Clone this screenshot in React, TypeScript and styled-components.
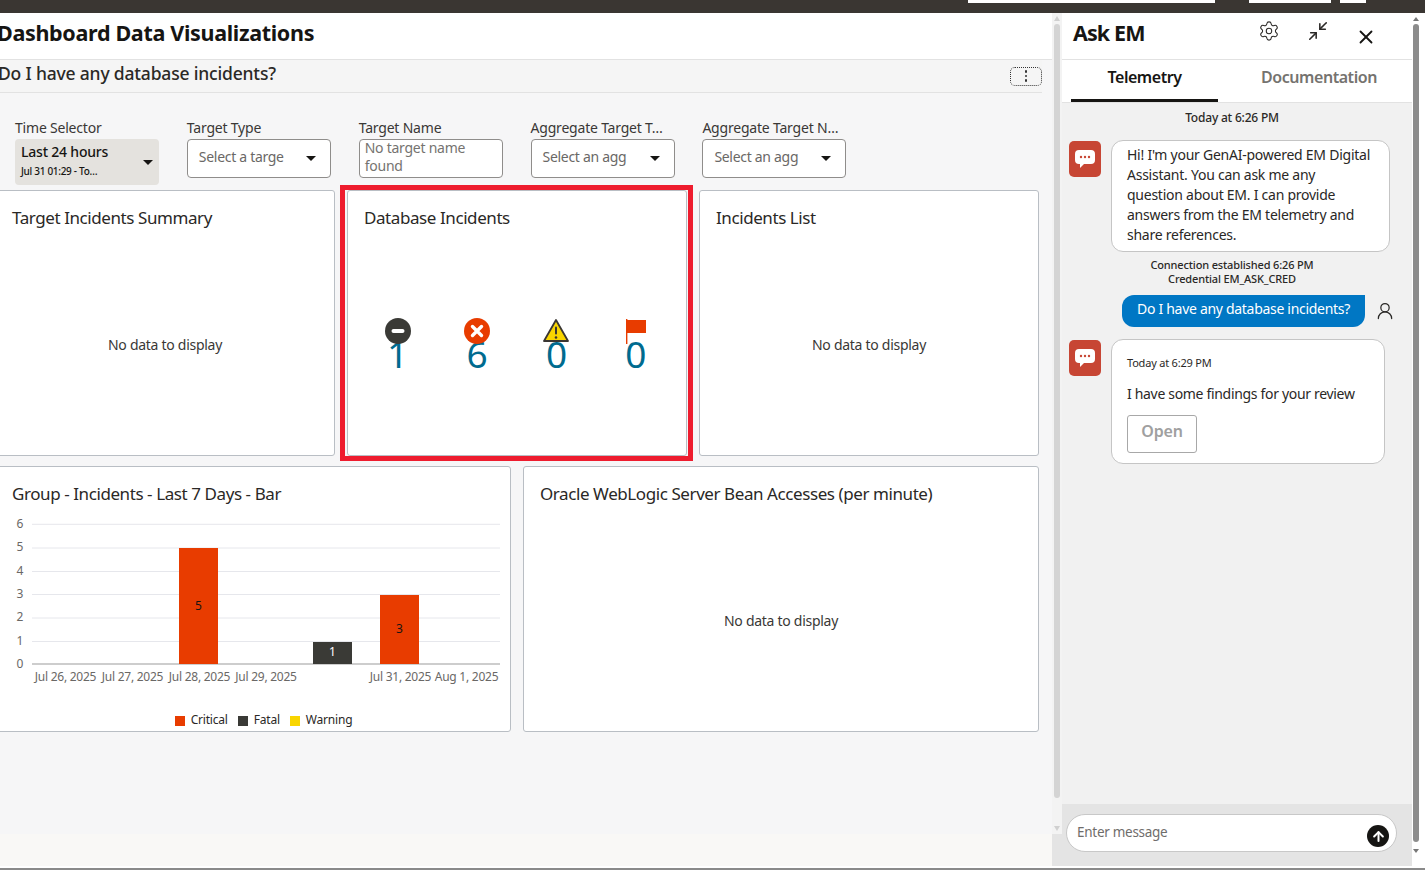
import React from "react";
import styled, { createGlobalStyle } from "styled-components";
import { Settings, Minimize2, X, UserRound, ArrowUp } from "lucide-react";

const Global = createGlobalStyle`
  html, body { margin: 0; padding: 0; height: 870px; overflow: hidden; background: #fff; }
  * { box-sizing: border-box; }
  body { font-family: "Noto Sans", "Liberation Sans", sans-serif; color: #161513; }
`;

const Page = styled.div`
  width: 1425px; height: 870px; display: flex; flex-direction: column; overflow: hidden;
`;
const TopBar = styled.div`
  height: 13px; flex: none; background: #3a3632; display: flex; justify-content: flex-start; padding-left: 968px; gap: 34px;
`;
const TopBlock = styled.div<{ $w: number; $gap?: number }>`
  width: ${p => p.$w}px; height: 3px; background: #fff; margin-right: ${p => p.$gap ?? 0}px;
`;
const Body = styled.div`
  height: 855px; flex: none; display: flex;
`;
const BottomLine = styled.div`
  height: 2px; flex: none; background: #8a8a8a;
`;
const Left = styled.main`
  width: 1052px; flex: none; display: flex; flex-direction: column; overflow: hidden; background: #f9f8f6; height: 853px;
`;
const LeftInner = styled.div`
  height: 821px; flex: none; background: #f6f6f7; margin-left: -5px; width: 1057px; display: flex; flex-direction: column;
`;
const TitleBar = styled.header`
  height: 47px; flex: none; background: #fff; border-bottom: 1px solid #e2e2e2; padding: 5px 0 0 2px;
`;
const Title = styled.h1`
  margin: 0; font-size: 21.5px; line-height: 30px; font-weight: 700; color: #161513; letter-spacing: -0.32px;
`;
const SubBar = styled.div`
  height: 33px; flex: none; margin-right: 10px; border-bottom: 1px solid #e2e2e2; background: #f5f5f5;
  display: flex; align-items: center; justify-content: space-between; padding: 0 0 7px 3px;
`;
const SubTitle = styled.h2`
  margin: 0; font-size: 17.5px; line-height: 26px; font-weight: 500; color: #2b2926; letter-spacing: -0.18px;
`;
const Kebab = styled.button`
  width: 32px; height: 19px; padding: 0; border: 1px dotted #333; border-radius: 5px; background: transparent;
  display: flex; flex-direction: column; align-items: center; justify-content: center; gap: 2px; margin-top: 7px;
`;
const Dot = styled.span`
  width: 2.5px; height: 2.5px; border-radius: 50%; background: #333;
`;
const Filters = styled.section`
  height: 97px; flex: none; padding: 26px 0 0 20px; display: grid; grid-template-columns: repeat(5, 171.85px); align-items: start;
`;
const Field = styled.div`
  width: 144px; display: flex; flex-direction: column;
`;
const FieldLabel = styled.label`
  font-size: 14px; line-height: 17px; height: 20px; color: #3a3836; white-space: nowrap; letter-spacing: -0.2px;
`;
const SelectBox = styled.div`
  height: 39px; border: 1px solid #8f8d8b; border-radius: 4px; background: #fff; display: flex; align-items: center;
  justify-content: space-between; padding: 0 14px 5px 11px; font-size: 14px; color: #6a6866; letter-spacing: -0.3px;
`;
const SelectCaret = styled.span`
  width: 0; height: 0; border-left: 5px solid transparent; border-right: 5px solid transparent; border-top: 5px solid #161513; margin-top: 5px;
`;
const NameBox = styled.div`
  height: 39px; border: 1px solid #8f8d8b; border-radius: 4px; background: #fff; padding: 0 5px; font-size: 14px;
  line-height: 18px; color: #757370; letter-spacing: -0.25px; overflow: hidden;
`;
const NameText = styled.span`
  display: block; margin-top: -1px;
`;
const TimeBox = styled.div`
  height: 46px; border-radius: 4px; background: #e4e2de; display: flex; align-items: center; justify-content: space-between;
  padding: 0 6px 2px;
`;
const TimeMain = styled.div`
  font-size: 14px; line-height: 20px; font-weight: 500; color: #161513; letter-spacing: -0.2px;
`;
const TimeSub = styled.div`
  font-size: 10px; line-height: 18px; font-weight: 500; color: #161513; letter-spacing: -0.3px;
`;
const Caret = styled.span`
  width: 0; height: 0; border-left: 5px solid transparent; border-right: 5px solid transparent; border-top: 5px solid #161513; margin-top: 2px;
`;
const Row = styled.div<{ $cols: number; $h: number }>`
  display: grid; grid-template-columns: repeat(${p => p.$cols}, 1fr); gap: 12px; height: ${p => p.$h}px; width: 1044px; margin-bottom: 10px; flex: none;
`;
const Card = styled.article<{ $highlight?: boolean }>`
  position: relative; background: #fff; border: 1px solid #b9bec4; border-radius: 3px; padding: 15px 16px 0;
  display: flex; flex-direction: column; min-width: 0;
  ${p => p.$highlight ? `&::after { content: ""; position: absolute; top: -6px; bottom: -6px; left: -8px; right: -7px; border: 5px solid #ee1c2e; pointer-events: none; }` : ""}
`;
const CardTitle = styled.h3`
  margin: 0; font-size: 17px; line-height: 24px; font-weight: 400; color: #2a2826; letter-spacing: -0.42px;
`;
const Empty = styled.div`
  flex: 1; display: flex; align-items: center; justify-content: center; font-size: 14px; color: #3a3836; padding-top: 4px; letter-spacing: -0.28px;
`;
const Incidents = styled.div`
  display: flex; padding-top: 88px; margin-left: -6px;
`;
const Incident = styled.div`
  width: 79.4px; flex: none; display: flex; flex-direction: column; align-items: center;
`;
const IconSlot = styled.div`
  width: 26px; height: 26px; flex: none; position: relative; z-index: 1;
`;
const Count = styled.div`
  font-size: 37px; line-height: 37px; font-weight: 400; color: #006b8f; margin-top: -9px;
`;
const ChartSvg = styled.svg`
  display: block; flex: none; margin: 4px 0 0 -12px;
`;
const Legend = styled.div`
  display: flex; justify-content: center; gap: 10px; font-size: 12px; line-height: 14px; color: #2a2826; margin: 11px 0 0 21px; letter-spacing: -0.2px;
`;
const LegendItem = styled.span`
  display: flex; align-items: center; gap: 6px;
`;
const Swatch = styled.i<{ $c: string }>`
  width: 10px; height: 10px; background: ${p => p.$c}; display: block; margin-top: 2px;
`;
const Strip = styled.div`
  width: 10px; height: 821px; flex: none; background: #f3f3f3; display: flex; flex-direction: column; align-items: center; padding-right: 1px;
`;
const StripArrow = styled.span<{ $down?: boolean }>`
  width: 0; height: 0; border-left: 3px solid transparent; border-right: 3px solid transparent; margin: 3px 0;
  ${p => p.$down ? "border-top: 5px solid #d0d0d0;" : "border-bottom: 5px solid #d0d0d0;"}
`;
const StripThumb = styled.div`
  width: 6px; height: 774px; background: #d4d4d4; border-radius: 3px; margin-bottom: 25px;
`;
const Panel = styled.aside`
  width: 350px; flex: none; height: 853px; display: flex; flex-direction: column; background: #f1f1f1;
`;
const PanelHead = styled.div`
  height: 47px; flex: none; background: #fff; border-bottom: 1px solid #e2e2e2; display: flex; align-items: flex-start; padding: 5px 0 0 11px;
`;
const PanelTitle = styled.h2`
  margin: 0; font-size: 21.5px; line-height: 30px; font-weight: 700; width: 185px; letter-spacing: -0.9px;
`;
const HeadIcons = styled.div`
  display: flex; color: #2a2826; margin-top: 1px;
`;
const HeadIcon = styled.span<{ $w: number; $y?: number }>`
  width: ${p => p.$w}px; display: flex; justify-content: center; margin-top: ${p => p.$y ?? 0}px;
`;
const Tabs = styled.div`
  height: 43px; flex: none; background: #fff; border-bottom: 1px solid #e2e2e2; display: flex; gap: 16px; padding-left: 9px;
`;
const Tab = styled.div<{ $active?: boolean; $w: number }>`
  width: ${p => p.$w}px; height: 42px; flex: none; display: flex; align-items: center; justify-content: center; padding-bottom: 6px;
  font-size: 16px; font-weight: 600; letter-spacing: -0.45px; color: ${p => p.$active ? "#161513" : "#75736f"};
  border-bottom: 3px solid ${p => p.$active ? "#161513" : "transparent"};
`;
const Chat = styled.div`
  flex: 1; min-height: 0; display: flex; flex-direction: column; padding: 7px 0 0 7px;
`;
const Stamp = styled.div`
  width: 326px; text-align: center; font-size: 12px; line-height: 16px; font-weight: 500; color: #2a2826; letter-spacing: -0.2px;
`;
const Msg = styled.div<{ $top?: number }>`
  display: flex; gap: 10px; align-items: flex-start; margin-top: ${p => p.$top ?? 0}px;
`;
const Avatar = styled.div`
  width: 32px; height: 36px; flex: none; margin-top: 1px; border-radius: 5px; background: #c74634; display: flex; align-items: center; justify-content: center;
`;
const Bubble = styled.div<{ $w: number; $h: number }>`
  width: ${p => p.$w}px; height: ${p => p.$h}px; background: #fff; border: 1px solid #c5c5c5; border-radius: 12px;
  padding: 4px 15px; font-size: 14px; line-height: 20px; color: #2a2826; letter-spacing: -0.25px;
`;
const Conn = styled.div`
  width: 326px; text-align: center; font-size: 11px; line-height: 14px; margin-top: 6px; font-weight: 500; color: #2a2826; letter-spacing: -0.15px;
`;
const UserRow = styled.div`
  display: flex; align-items: center; margin: 9px 0 12px 53px; gap: 10px;
`;
const UserBubble = styled.div`
  width: 243px; height: 32px; background: #0077c4; color: #fff; border-radius: 12px 0 12px 12px; font-size: 14px;
  display: flex; align-items: center; justify-content: center; padding-bottom: 6px; letter-spacing: -0.3px;
`;
const UserIcon = styled.span`
  display: flex; color: #2a2826;
`;
const SmallTime = styled.div`
  font-size: 11px; line-height: 16px; margin-top: 11px; color: #2a2826; letter-spacing: -0.2px;
`;
const Finding = styled.div`
  margin-top: 13px; line-height: 20px; font-size: 14px; letter-spacing: -0.32px;
`;
const OpenBtn = styled.button`
  display: block; width: 70px; height: 38px; margin-top: 11px; background: #fff; border: 1px solid #a8a8a8; border-radius: 3px;
  color: #a0a0a0; font: 600 16px "Noto Sans", sans-serif; padding: 0 0 6px; letter-spacing: -0.2px;
`;
const Composer = styled.div`
  position: relative; height: 62px; flex: none; background: #e4e4e4; padding: 10px 15px 0 4px;
  &::before { content: ""; position: absolute; left: -10px; top: 30px; bottom: 0; width: 10px; background: #e4e4e4; }
`;
const InputPill = styled.div`
  height: 38px; background: #fff; border: 1px solid #c8c8c8; border-radius: 19px; display: flex; align-items: flex-start; justify-content: space-between;
  padding: 8px 7px 0 10px; font-size: 13.5px; line-height: 19px; color: #6f6d6b; letter-spacing: -0.28px;
`;
const Send = styled.span`
  width: 22px; height: 22px; border-radius: 50%; background: #161513; color: #fff; display: flex; align-items: center; justify-content: center; margin-top: 2px;
`;
const MainScroll = styled.div`
  width: 13px; flex: none; height: 853px; background: #fff; display: flex; flex-direction: column; align-items: center; padding-right: 5px;
`;
const ScrollArrow = styled.span<{ $down?: boolean }>`
  width: 0; height: 0; border-left: 3.5px solid transparent; border-right: 3.5px solid transparent; margin: 4px 0 3px;
  ${p => p.$down ? "border-top: 4px solid #777;" : "border-bottom: 4px solid #777;"}
`;
const ScrollThumb = styled.div`
  width: 6px; height: 818px; background: #8c8c8c; border-radius: 3px; margin-bottom: 3px;
`;

const ChatGlyph = () => (
  <svg width="22" height="20" viewBox="0 0 22 20">
    <path d="M5 1h12a4 4 0 0 1 4 4v6a4 4 0 0 1-4 4H10l-4 4v-4H5a4 4 0 0 1-4-4V5a4 4 0 0 1 4-4z" fill="#fff" />
    <circle cx="7" cy="8" r="1.2" fill="#c74634" /><circle cx="11" cy="8" r="1.2" fill="#c74634" /><circle cx="15" cy="8" r="1.2" fill="#c74634" />
  </svg>
);

const FatalIcon = () => (
  <svg width="26" height="26" viewBox="0 0 26 26"><circle cx="13" cy="13" r="13" fill="#3a3a36" /><rect x="6.5" y="11" width="13" height="4" rx="2" fill="#fff" /></svg>
);
const CriticalIcon = () => (
  <svg width="26" height="26" viewBox="0 0 26 26"><circle cx="13" cy="13" r="13" fill="#e83c00" /><path d="M8.5 8.5l9 9M17.5 8.5l-9 9" stroke="#fff" strokeWidth="3.4" strokeLinecap="round" /></svg>
);
const WarnIcon = () => (
  <svg width="26" height="26" viewBox="0 0 26 26"><path d="M13 2L25 23H1z" fill="#f9d500" stroke="#3a3632" strokeWidth="1.8" strokeLinejoin="round" /><rect x="12" y="8.5" width="2" height="8" rx="1" fill="#3a3632" /><circle cx="13" cy="19.5" r="1.3" fill="#3a3632" /></svg>
);
const FlagIcon = () => (
  <svg width="26" height="26" viewBox="0 0 26 26"><rect x="3" y="1" width="1.4" height="25" fill="#e83c00" /><rect x="4" y="2" width="19" height="13" fill="#e83c00" /></svg>
);

const BarChart = () => {
  const grid = [14.3, 38, 61.5, 84.5, 108, 131.5];
  const yl = ["6", "5", "4", "3", "2", "1", "0"];
  const ylY = [14, 37, 61, 84, 107, 131, 154];
  const xl: [string, number][] = [["Jul 26, 2025", 65.5], ["Jul 27, 2025", 132.5], ["Jul 28, 2025", 199.5], ["Jul 29, 2025", 266], ["Jul 31, 2025", 400.5], ["Aug 1, 2025", 466.5]];
  return (
    <ChartSvg width="516" height="192" viewBox="0 0 516 192">
      {grid.map(y => <line key={y} x1="32" x2="500" y1={y} y2={y} stroke="#e6e7ec" strokeWidth="1" />)}
      <line x1="32" x2="500" y1="154" y2="154" stroke="#9b9b9b" strokeWidth="1" />
      {yl.map((t, i) => <text key={t} x="20" y={ylY[i] + 4} textAnchor="middle" fontSize="12" fill="#6a6866">{t}</text>)}
      <rect x="179" y="38" width="39" height="116" fill="#e83c00" />
      <rect x="313" y="132" width="39" height="22" fill="#3a3a36" />
      <rect x="380" y="85" width="39" height="69" fill="#e83c00" />
      <text x="198.5" y="100" textAnchor="middle" fontSize="12" fill="#161513">5</text>
      <text x="332.5" y="146" textAnchor="middle" fontSize="12" fill="#fff">1</text>
      <text x="399.5" y="123" textAnchor="middle" fontSize="12" fill="#161513">3</text>
      {xl.map(([t, x]) => <text key={t} x={x} y="171" textAnchor="middle" fontSize="12" letterSpacing="-0.25" fill="#6a6866">{t}</text>)}
    </ChartSvg>
  );
};

export default function App() {
  return (
    <Page>
      <Global />
      <TopBar>
        <TopBlock $w={247} />
        <TopBlock $w={82} $gap={-25} />
        <TopBlock $w={26} />
      </TopBar>
      <Body>
        <Left>
          <LeftInner>
            <TitleBar><Title>Dashboard Data Visualizations</Title></TitleBar>
            <SubBar>
              <SubTitle>Do I have any database incidents?</SubTitle>
              <Kebab aria-label="More"><Dot /><Dot /><Dot /></Kebab>
            </SubBar>
            <Filters>
              <Field>
                <FieldLabel>Time Selector</FieldLabel>
                <TimeBox>
                  <div>
                    <TimeMain>Last 24 hours</TimeMain>
                    <TimeSub>Jul 31 01:29 - To…</TimeSub>
                  </div>
                  <Caret />
                </TimeBox>
              </Field>
              <Field>
                <FieldLabel>Target Type</FieldLabel>
                <SelectBox>Select a targe<SelectCaret /></SelectBox>
              </Field>
              <Field>
                <FieldLabel>Target Name</FieldLabel>
                <NameBox><NameText>No target name found</NameText></NameBox>
              </Field>
              <Field>
                <FieldLabel>Aggregate Target T…</FieldLabel>
                <SelectBox>Select an agg<SelectCaret /></SelectBox>
              </Field>
              <Field>
                <FieldLabel>Aggregate Target N…</FieldLabel>
                <SelectBox>Select an agg<SelectCaret /></SelectBox>
              </Field>
            </Filters>
            <Row $cols={3} $h={266}>
              <Card>
                <CardTitle>Target Incidents Summary</CardTitle>
                <Empty>No data to display</Empty>
              </Card>
              <Card $highlight>
                <CardTitle>Database Incidents</CardTitle>
                <Incidents>
                  <Incident><IconSlot><FatalIcon /></IconSlot><Count>1</Count></Incident>
                  <Incident><IconSlot><CriticalIcon /></IconSlot><Count>6</Count></Incident>
                  <Incident><IconSlot><WarnIcon /></IconSlot><Count>0</Count></Incident>
                  <Incident><IconSlot><FlagIcon /></IconSlot><Count>0</Count></Incident>
                </Incidents>
              </Card>
              <Card>
                <CardTitle>Incidents List</CardTitle>
                <Empty>No data to display</Empty>
              </Card>
            </Row>
            <Row $cols={2} $h={266}>
              <Card>
                <CardTitle>Group - Incidents - Last 7 Days - Bar</CardTitle>
                <BarChart />
                <Legend>
                  <LegendItem><Swatch $c="#e83c00" />Critical</LegendItem>
                  <LegendItem><Swatch $c="#3a3a36" />Fatal</LegendItem>
                  <LegendItem><Swatch $c="#f9d500" />Warning</LegendItem>
                </Legend>
              </Card>
              <Card>
                <CardTitle>Oracle WebLogic Server Bean Accesses (per minute)</CardTitle>
                <Empty>No data to display</Empty>
              </Card>
            </Row>
          </LeftInner>
        </Left>
        <Strip>
          <StripArrow />
          <StripThumb />
          <StripArrow $down />
        </Strip>
        <Panel>
          <PanelHead>
            <PanelTitle>Ask EM</PanelTitle>
            <HeadIcons>
              <HeadIcon $w={22} $y={-1}><Settings size={26} strokeWidth={1.15} /></HeadIcon>
              <HeadIcon $w={75} $y={1}><Minimize2 size={22} strokeWidth={1.7} /></HeadIcon>
              <HeadIcon $w={22} $y={6}><X size={24} strokeWidth={2} color="#161513" /></HeadIcon>
            </HeadIcons>
          </PanelHead>
          <Tabs>
            <Tab $active $w={147}>Telemetry</Tab>
            <Tab $w={170}>Documentation</Tab>
          </Tabs>
          <Chat>
            <Stamp>Today at 6:26 PM</Stamp>
            <Msg $top={14}>
              <Avatar><ChatGlyph /></Avatar>
              <Bubble $w={279} $h={112}>Hi! I'm your GenAI-powered EM Digital Assistant. You can ask me any question about EM. I can provide answers from the EM telemetry and share references.</Bubble>
            </Msg>
            <Conn>Connection established 6:26 PM<br />Credential EM_ASK_CRED</Conn>
            <UserRow>
              <UserBubble>Do I have any database incidents?</UserBubble>
              <UserIcon><UserRound size={20} strokeWidth={1.5} /></UserIcon>
            </UserRow>
            <Msg>
              <Avatar><ChatGlyph /></Avatar>
              <Bubble $w={274} $h={125}>
                <SmallTime>Today at 6:29 PM</SmallTime>
                <Finding>I have some findings for your review</Finding>
                <OpenBtn>Open</OpenBtn>
              </Bubble>
            </Msg>
          </Chat>
          <Composer>
            <InputPill>
              Enter message
              <Send><ArrowUp size={15} strokeWidth={3.2} /></Send>
            </InputPill>
          </Composer>
        </Panel>
        <MainScroll>
          <ScrollArrow />
          <ScrollThumb />
          <ScrollArrow $down />
        </MainScroll>
      </Body>
      <BottomLine />
    </Page>
  );
}
